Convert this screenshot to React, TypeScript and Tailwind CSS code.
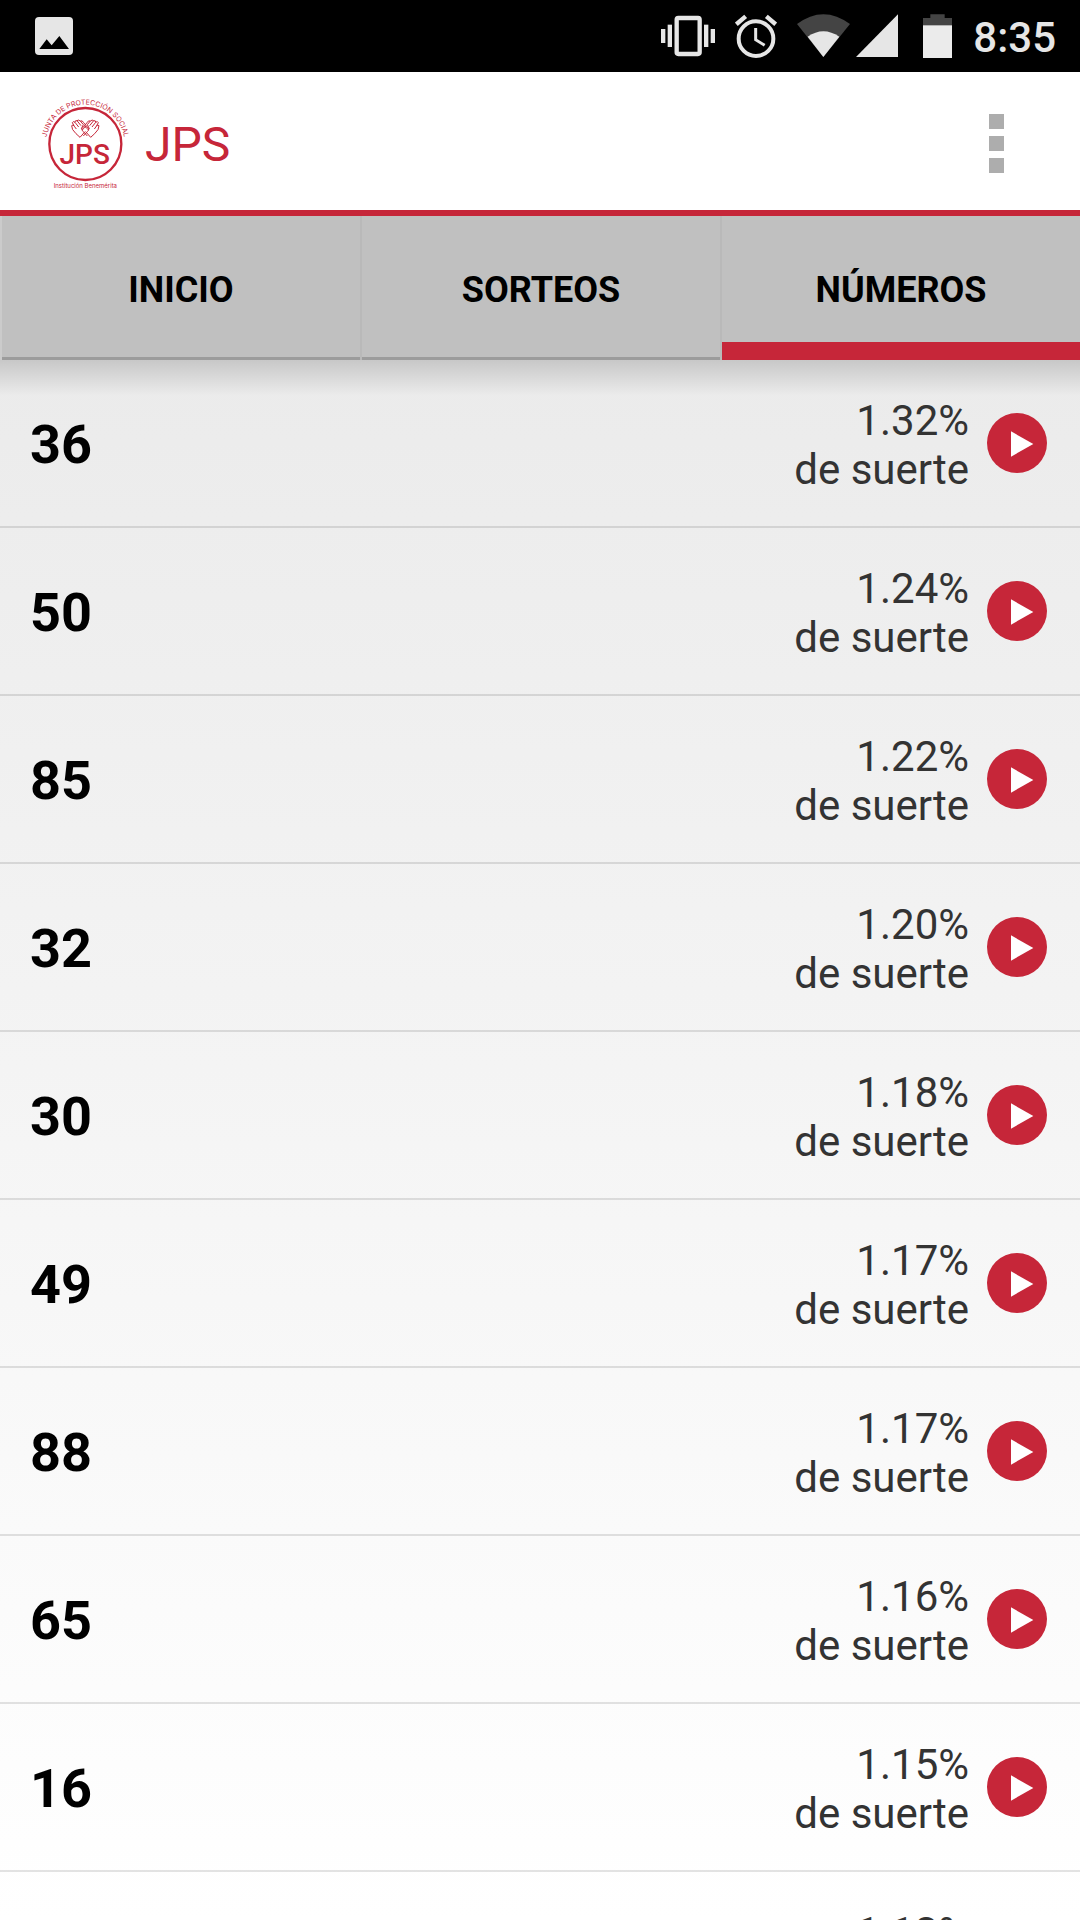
import { useState } from "react";

type LuckyNumber = {
  number: string;
  luck: string;
};

const tabs = ["INICIO", "SORTEOS", "NÚMEROS"];

const luckyNumbers: LuckyNumber[] = [
  { number: "36", luck: "1.32%" },
  { number: "50", luck: "1.24%" },
  { number: "85", luck: "1.22%" },
  { number: "32", luck: "1.20%" },
  { number: "30", luck: "1.18%" },
  { number: "49", luck: "1.17%" },
  { number: "88", luck: "1.17%" },
  { number: "65", luck: "1.16%" },
  { number: "16", luck: "1.15%" },
  { number: "23", luck: "1.13%" },
];

const StatusBar = () => {
  return (
    <div className="flex h-[72px] shrink-0 items-center bg-black pr-6 pl-[35px] text-[#e6e6e6]">
      <svg className="h-[38px] w-[38px]" viewBox="0 0 114 114">
        <rect width="114" height="114" rx="12" fill="#e6e6e6" />
        <path d="M13 96 L35 67 L50 85 L73 57 L102 96 Z" fill="#000" />
      </svg>
      <div className="ml-auto flex items-center">
        <svg className="h-[72px] w-[54px]" viewBox="60 0 162 216" fill="#e6e6e6">
          <rect x="60" y="87" width="13" height="42" />
          <rect x="80" y="74" width="13" height="67" />
          <rect x="189" y="74" width="13" height="67" />
          <rect x="209" y="87" width="13" height="42" />
          <rect
            x="107"
            y="54"
            width="69"
            height="108"
            rx="5"
            fill="none"
            stroke="#e6e6e6"
            strokeWidth="13"
          />
        </svg>
        <svg
          className="ml-5 h-[72px] w-[42px]"
          viewBox="284 0 126 216"
          fill="none"
          stroke="#e6e6e6"
        >
          <circle cx="347" cy="116" r="52" strokeWidth="12" />
          <path d="M346 84 V119 L373 136" strokeWidth="9" />
          <path d="M288 73 L316 49 M406 73 L378 49" strokeWidth="13" />
        </svg>
        <svg className="ml-5 h-[72px] w-[53px]" viewBox="471 0 159 216">
          <path d="M471 72 Q550 13 630 72 L550 171 Z" fill="#444" />
          <path d="M503 110 Q550 77 598 110 L550 171 Z" fill="#e6e6e6" />
        </svg>
        <svg className="ml-1.5 h-[72px] w-[42px]" viewBox="647 0 126 216">
          <path d="M647 171 L773 43 V171 Z" fill="#e6e6e6" />
        </svg>
        <svg className="ml-[25px] h-[72px] w-[29px]" viewBox="849 0 87 216">
          <path d="M849 54 H871 V43 H914 V54 H936 V80 H849 Z" fill="#444" />
          <rect x="849" y="76" width="87" height="98" fill="#ebebeb" />
        </svg>
        <span className="mt-0.5 ml-[21px] text-[42px] leading-[49px] font-medium">
          8:35
        </span>
      </div>
    </div>
  );
};

const Hand = () => {
  return (
    <path
      d="M240 412 L228 401 Q214 388 215 377 Q219 372 223 379 L229 387 M223 379 L217 368 Q219 362 225 367 L236 381 M225 367 Q224 361 231 362 L243 377 M231 362 Q235 358 241 363 L250 374 M241 363 Q247 360 251 368 L266 386 Q268 390 262 395 L250 408 M250 374 L244 386 Q247 392 253 384 L258 378 M257 395 L272 412"
      fill="none"
      stroke="#c62639"
      strokeWidth="3"
    />
  );
};

const Logo = () => {
  return (
    <svg
      className="h-24 w-[90px]"
      viewBox="120 291 270 288"
      fill="#c62639"
      role="img"
      aria-label="Junta de Protección Social"
    >
      <path id="arc" d="M138 432 A118 118 0 0 1 374 432" fill="none" />
      <text fontSize="21" fontFamily="Inter, sans-serif" textAnchor="middle">
        <textPath href="#arc" startOffset="50%">
          JUNTA DE PROTECCIÓN SOCIAL
        </textPath>
      </text>
      <circle
        cx="256"
        cy="432"
        r="108"
        fill="none"
        stroke="#c62639"
        strokeWidth="7"
      />
      <Hand />
      <g transform="translate(512 0) scale(-1 1)">
        <Hand />
      </g>
      <text
        x="254"
        y="492"
        fontSize="84"
        fontFamily="Roboto, sans-serif"
        fontWeight="500"
        textAnchor="middle"
      >
        JPS
      </text>
      <text
        x="256"
        y="564"
        fontSize="18"
        fontFamily="Inter, sans-serif"
        textAnchor="middle"
      >
        Institución Benemérita
      </text>
    </svg>
  );
};

const Header = () => {
  return (
    <header className="flex h-36 shrink-0 items-center border-b-6 border-[#c62639] bg-white pt-2 pr-[70px] pl-10">
      <Logo />
      <h1 className="ml-[15px] text-[48px] leading-[56px] text-[#c62639]">
        JPS
      </h1>
      <button
        aria-label="Más opciones"
        className="mr-0 mb-1 ml-auto flex flex-col gap-[7px] px-1.5"
      >
        <span className="h-[15px] w-[15px] bg-[#adadad]" />
        <span className="h-[15px] w-[15px] bg-[#adadad]" />
        <span className="h-[15px] w-[15px] bg-[#adadad]" />
      </button>
    </header>
  );
};

const PlayIcon = () => {
  return (
    <svg className="h-[60px] w-[60px]" viewBox="0 0 180 180">
      <circle cx="90" cy="90" r="90" fill="#c62639" />
      <path d="M72 55 L139 93 L72 131 Z" fill="#fff" />
    </svg>
  );
};

const App = () => {
  const [activeTab, setActiveTab] = useState("NÚMEROS");

  return (
    <div className="flex h-screen flex-col overflow-hidden bg-white font-[Roboto,sans-serif]">
      <StatusBar />
      <Header />
      <nav role="tablist" className="flex h-36 shrink-0 bg-[#c0c0c0]">
        {tabs.map((tab) => (
          <button
            key={tab}
            role="tab"
            aria-selected={activeTab === tab}
            onClick={() => setActiveTab(tab)}
            className="flex flex-1 flex-col border-r-2 border-[#b9b9b9] text-[36px] leading-[42px] font-bold text-black first:border-l-2 first:border-l-[#cbcbcb] last:border-r-0"
          >
            <span className="flex h-full w-full items-center justify-center pt-1">
              {tab}
            </span>
            <span
              className={
                activeTab === tab
                  ? "-mt-[18px] h-[18px] w-full shrink-0 bg-[#c62639]"
                  : "-mt-[3px] h-[3px] w-full shrink-0 bg-[#9c9c9c]"
              }
            />
          </button>
        ))}
      </nav>
      <main className="relative min-h-0 flex-1 bg-linear-to-b from-[#ebebeb] to-white">
        {/* tab bar shadow */}
        <div className="pointer-events-none absolute inset-x-0 top-0 h-9 bg-linear-to-b from-black/15 to-transparent" />
        <ul className="h-full overflow-y-auto [scrollbar-width:none]">
          {luckyNumbers.map((item) => (
            <li
              key={item.number}
              className="flex h-[168px] items-center border-b-2 border-black/11 pr-[33px] pl-[30px]"
            >
              <span className="mt-1 text-[54px] leading-[64px] font-bold text-black">
                {item.number}
              </span>
              <p className="mt-1 ml-auto text-right text-[42px] leading-[49px] text-[#333]">
                {item.luck}
                <br />
                de suerte
              </p>
              <button aria-label={`Jugar ${item.number}`} className="ml-[18px]">
                <PlayIcon />
              </button>
            </li>
          ))}
        </ul>
      </main>
    </div>
  );
};

export default App;
